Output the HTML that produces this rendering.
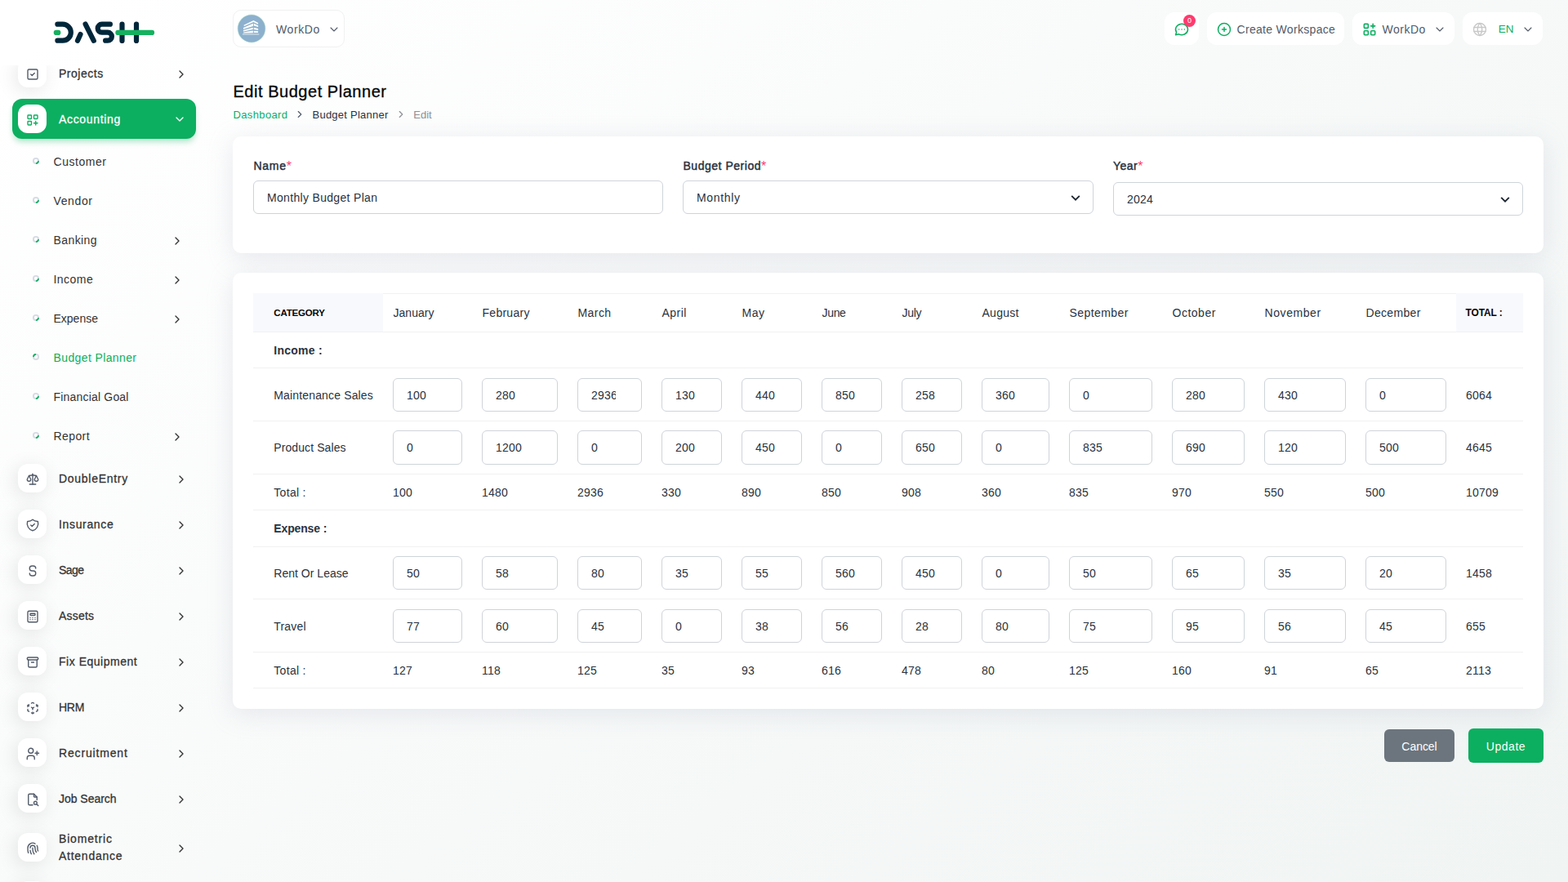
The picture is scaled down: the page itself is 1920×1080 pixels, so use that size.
<!DOCTYPE html><html lang="en"><head><meta charset="utf-8"><title>Edit Budget Planner</title><style>
*{box-sizing:border-box;margin:0;padding:0}
html,body{width:1920px;height:1080px;overflow:hidden}
body{font-family:"Liberation Sans",sans-serif;font-size:14px;color:#293240;background:linear-gradient(141.55deg,rgba(240,244,243,0) 3.46%,#f0f4f3 99.86%),#fff;position:relative}
.abs{position:absolute}
svg.ti{display:block}
.t{position:absolute;white-space:nowrap;line-height:1}
/* sidebar */
#side{position:absolute;left:0;top:0;width:280px;height:1080px}
#nav{position:absolute;left:0;top:80px;width:280px;height:1000px;overflow:hidden}
.mi{position:absolute;left:22px;width:35px;height:35px;border-radius:12px;background:#fff;box-shadow:-3px 4px 23px rgba(0,0,0,.1);display:flex;align-items:center;justify-content:center}
.mt{position:absolute;left:72px;font-size:14px;line-height:21px;color:#333;white-space:nowrap;-webkit-text-stroke:.28px #333}

.st{position:absolute;left:65.500px;font-size:14px;line-height:21px;color:#333;white-space:nowrap;letter-spacing:.3px}
.arr{position:absolute}
.dot{position:absolute;left:39px;width:10px;height:10px;overflow:visible}
/* header */
.hb{position:absolute;top:15px;height:40px;border-radius:12px;background:#fff}
.ht{position:absolute;font-size:14px;line-height:20px;white-space:nowrap}
/* cards */
.card{position:absolute;left:285px;width:1605px;background:#fff;border-radius:10px;box-shadow:0 6px 30px rgba(182,186,203,.3)}
.lbl{position:absolute;font-size:14px;line-height:21px;color:#293240;white-space:nowrap;-webkit-text-stroke:.45px #293240}
.lbl i{color:#ff3a6e;font-style:normal;-webkit-text-stroke:0;font-size:16px;line-height:1;position:relative;top:1px}
.inp{position:absolute;height:41px;border:1px solid #ced4da;border-radius:6px;background:#fff;font-size:14px;line-height:40.500px;padding-left:16px;color:#293240;white-space:nowrap;overflow:hidden}
.inp.n{letter-spacing:.22px}
/* table */
.hl{position:absolute;left:310px;width:1555px;height:1px;background:#f1f1f1}
.th{position:absolute;background:#f8f9fd}
.c{position:absolute;font-size:14px;line-height:21px;color:#293240;white-space:nowrap}
.c.n{letter-spacing:.22px}
.c.b{font-weight:700}
.c.h{font-size:12px;font-weight:700;color:#060606}
.btn{position:absolute;border-radius:6px;color:#fff;font-size:14px;text-align:center}
</style></head><body>
<div id="side">
<svg class="abs" style="left:65px;top:22px" width="126" height="36" viewBox="0 0 126 36" fill="none" stroke-linecap="round" stroke-linejoin="round" aria-label="Dash">
<g stroke="#00263a" stroke-width="6.200">
<path d="M5.400 7.660H11.800A10 10 0 0 1 11.800 27.700H5.400"/>
<path d="M30 27.850L33.500 20"/><path d="M39.600 7.600L49.800 27.850"/>
<path d="M69.900 7.660H59.700A5 5 0 0 0 59.700 17.700H66.900A5 5 0 0 1 66.900 27.700H64.100"/>
<path d="M84.500 7.600V28"/><path d="M102 7.600V28"/>
</g>
<g stroke="#14b15f" stroke-width="6.200"><path d="M3.800 17.900H6.300"/><path d="M79.400 17.900H121"/></g>
</svg>
<div id="nav">
<div class="mi" style="top:-8.0px;"><div style="margin:2.500px 0 0 0"><svg class="ti" width="18" height="18" viewBox="0 0 24 24" fill="none" stroke="#525b69" stroke-width="1.85" stroke-linecap="round" stroke-linejoin="round" ><rect x="4" y="4" width="16" height="16" rx="2"/><path d="M9 12l2 2l4 -4"/></svg></div></div>
<div class="mt" style="top:0.0px;letter-spacing:0.52px;">Projects</div>
<div class="arr" style="left:213.700px;top:3.0px"><svg class="ti" width="16" height="16" viewBox="0 0 24 24" fill="none" stroke="#333" stroke-width="2" stroke-linecap="round" stroke-linejoin="round" ><path d="M9 6l6 6l-6 6"/></svg></div>
<div class="abs" style="left:15px;top:41.0px;width:225px;height:49px;border-radius:12px;background:#0CAF60;box-shadow:0 5px 7px -1px rgba(12,175,96,.3)"></div>
<div class="mi" style="top:48.0px;box-shadow:none;"><div style="margin:2.500px 0 0 0"><svg class="ti" width="18" height="18" viewBox="0 0 24 24" fill="none" stroke="#0CAF60" stroke-width="1.85" stroke-linecap="round" stroke-linejoin="round" ><rect x="4" y="4" width="6" height="6" rx="1"/><rect x="14" y="4" width="6" height="6" rx="1"/><rect x="4" y="14" width="6" height="6" rx="1"/><path d="M14 17h6m-3 -3v6"/></svg></div></div>
<div class="mt" style="top:56.0px;color:#fff;-webkit-text-stroke-color:#fff;letter-spacing:0.67px;">Accounting</div>
<div class="arr" style="left:212.400px;top:57.5px"><svg class="ti" width="16" height="16" viewBox="0 0 24 24" fill="none" stroke="#fff" stroke-width="2" stroke-linecap="round" stroke-linejoin="round" ><path d="M6 9l6 6l6 -6"/></svg></div>
<svg class="dot" style="top:112.0px" viewBox="0 0 10 10" fill="none"><circle cx="5" cy="5" r="3.100" stroke="#d6dae4" stroke-width="1.900"/><path d="M7.990 5.800A3.100 3.100 0 0 1 5.800 7.990" stroke="#0CAF60" stroke-width="1.900" stroke-linecap="round"/></svg>
<div class="st" style="top:108.0px;color:#333;letter-spacing:0.54px;">Customer</div>
<svg class="dot" style="top:160.0px" viewBox="0 0 10 10" fill="none"><circle cx="5" cy="5" r="3.100" stroke="#d6dae4" stroke-width="1.900"/><path d="M7.990 5.800A3.100 3.100 0 0 1 5.800 7.990" stroke="#0CAF60" stroke-width="1.900" stroke-linecap="round"/></svg>
<div class="st" style="top:156.0px;color:#333;letter-spacing:0.62px;">Vendor</div>
<svg class="dot" style="top:208.0px" viewBox="0 0 10 10" fill="none"><circle cx="5" cy="5" r="3.100" stroke="#d6dae4" stroke-width="1.900"/><path d="M7.990 5.800A3.100 3.100 0 0 1 5.800 7.990" stroke="#0CAF60" stroke-width="1.900" stroke-linecap="round"/></svg>
<div class="st" style="top:204.0px;color:#333;letter-spacing:0.41px;">Banking</div>
<div class="arr" style="left:209.100px;top:207.0px"><svg class="ti" width="16" height="16" viewBox="0 0 24 24" fill="none" stroke="#333" stroke-width="2" stroke-linecap="round" stroke-linejoin="round" ><path d="M9 6l6 6l-6 6"/></svg></div>
<svg class="dot" style="top:256.0px" viewBox="0 0 10 10" fill="none"><circle cx="5" cy="5" r="3.100" stroke="#d6dae4" stroke-width="1.900"/><path d="M7.990 5.800A3.100 3.100 0 0 1 5.800 7.990" stroke="#0CAF60" stroke-width="1.900" stroke-linecap="round"/></svg>
<div class="st" style="top:252.0px;color:#333;letter-spacing:0.46px;">Income</div>
<div class="arr" style="left:209.100px;top:255.0px"><svg class="ti" width="16" height="16" viewBox="0 0 24 24" fill="none" stroke="#333" stroke-width="2" stroke-linecap="round" stroke-linejoin="round" ><path d="M9 6l6 6l-6 6"/></svg></div>
<svg class="dot" style="top:304.0px" viewBox="0 0 10 10" fill="none"><circle cx="5" cy="5" r="3.100" stroke="#d6dae4" stroke-width="1.900"/><path d="M7.990 5.800A3.100 3.100 0 0 1 5.800 7.990" stroke="#0CAF60" stroke-width="1.900" stroke-linecap="round"/></svg>
<div class="st" style="top:300.0px;color:#333;letter-spacing:0.0px;">Expense</div>
<div class="arr" style="left:209.100px;top:303.0px"><svg class="ti" width="16" height="16" viewBox="0 0 24 24" fill="none" stroke="#333" stroke-width="2" stroke-linecap="round" stroke-linejoin="round" ><path d="M9 6l6 6l-6 6"/></svg></div>
<svg class="dot" style="top:352.0px" viewBox="0 0 10 10" fill="none"><circle cx="5" cy="5" r="3.100" stroke="#d6dae4" stroke-width="1.900"/><path d="M2.010 4.200A3.100 3.100 0 0 1 4.200 2.010" stroke="#0CAF60" stroke-width="1.900" stroke-linecap="round"/></svg>
<div class="st" style="top:348.0px;color:#0CAF60;letter-spacing:0.38px;">Budget Planner</div>
<svg class="dot" style="top:400.0px" viewBox="0 0 10 10" fill="none"><circle cx="5" cy="5" r="3.100" stroke="#d6dae4" stroke-width="1.900"/><path d="M7.990 5.800A3.100 3.100 0 0 1 5.800 7.990" stroke="#0CAF60" stroke-width="1.900" stroke-linecap="round"/></svg>
<div class="st" style="top:396.0px;color:#333;letter-spacing:0.19px;">Financial Goal</div>
<svg class="dot" style="top:448.0px" viewBox="0 0 10 10" fill="none"><circle cx="5" cy="5" r="3.100" stroke="#d6dae4" stroke-width="1.900"/><path d="M7.990 5.800A3.100 3.100 0 0 1 5.800 7.990" stroke="#0CAF60" stroke-width="1.900" stroke-linecap="round"/></svg>
<div class="st" style="top:444.0px;color:#333;letter-spacing:0.4px;">Report</div>
<div class="arr" style="left:209.100px;top:447.0px"><svg class="ti" width="16" height="16" viewBox="0 0 24 24" fill="none" stroke="#333" stroke-width="2" stroke-linecap="round" stroke-linejoin="round" ><path d="M9 6l6 6l-6 6"/></svg></div>
<div class="mi" style="top:488.0px;"><div style="margin:2.500px 0 0 0"><svg class="ti" width="18" height="18" viewBox="0 0 24 24" fill="none" stroke="#525b69" stroke-width="1.85" stroke-linecap="round" stroke-linejoin="round" ><path d="M7 20h10"/><path d="M6 6l6 -1l6 1"/><path d="M12 3v17"/><path d="M9 12l-3 -6l-3 6a3 3 0 0 0 6 0"/><path d="M21 12l-3 -6l-3 6a3 3 0 0 0 6 0"/></svg></div></div>
<div class="mt" style="top:496.0px;letter-spacing:0.72px;">DoubleEntry</div>
<div class="arr" style="left:213.700px;top:499.0px"><svg class="ti" width="16" height="16" viewBox="0 0 24 24" fill="none" stroke="#333" stroke-width="2" stroke-linecap="round" stroke-linejoin="round" ><path d="M9 6l6 6l-6 6"/></svg></div>
<div class="mi" style="top:544.0px;"><div style="margin:2.500px 0 0 0"><svg class="ti" width="18" height="18" viewBox="0 0 24 24" fill="none" stroke="#525b69" stroke-width="1.85" stroke-linecap="round" stroke-linejoin="round" ><path d="M9 12l2 2l4 -4"/><path d="M12 3a12 12 0 0 0 8.5 3a12 12 0 0 1 -8.5 15a12 12 0 0 1 -8.5 -15a12 12 0 0 0 8.5 -3"/></svg></div></div>
<div class="mt" style="top:552.0px;letter-spacing:0.66px;">Insurance</div>
<div class="arr" style="left:213.700px;top:555.0px"><svg class="ti" width="16" height="16" viewBox="0 0 24 24" fill="none" stroke="#333" stroke-width="2" stroke-linecap="round" stroke-linejoin="round" ><path d="M9 6l6 6l-6 6"/></svg></div>
<div class="mi" style="top:600.0px;"><div style="margin:2.500px 0 0 0"><svg class="ti" width="18" height="18" viewBox="0 0 24 24" fill="none" stroke="#525b69" stroke-width="1.85" stroke-linecap="round" stroke-linejoin="round" ><path d="M17 8a4 4 0 0 0 -4 -4h-2a4 4 0 0 0 0 8h2a4 4 0 0 1 0 8h-2a4 4 0 0 1 -4 -4"/></svg></div></div>
<div class="mt" style="top:608.0px;letter-spacing:-0.56px;">Sage</div>
<div class="arr" style="left:213.700px;top:611.0px"><svg class="ti" width="16" height="16" viewBox="0 0 24 24" fill="none" stroke="#333" stroke-width="2" stroke-linecap="round" stroke-linejoin="round" ><path d="M9 6l6 6l-6 6"/></svg></div>
<div class="mi" style="top:656.0px;"><div style="margin:2.500px 0 0 0"><svg class="ti" width="18" height="18" viewBox="0 0 24 24" fill="none" stroke="#525b69" stroke-width="1.85" stroke-linecap="round" stroke-linejoin="round" ><rect x="4" y="3" width="16" height="18" rx="2"/><rect x="8" y="7" width="8" height="3" rx="1"/><path d="M8 14v.01M12 14v.01M16 14v.01M8 17v.01M12 17v.01M16 17v.01"/></svg></div></div>
<div class="mt" style="top:664.0px;letter-spacing:0.2px;">Assets</div>
<div class="arr" style="left:213.700px;top:667.0px"><svg class="ti" width="16" height="16" viewBox="0 0 24 24" fill="none" stroke="#333" stroke-width="2" stroke-linecap="round" stroke-linejoin="round" ><path d="M9 6l6 6l-6 6"/></svg></div>
<div class="mi" style="top:712.0px;"><div style="margin:2.500px 0 0 0"><svg class="ti" width="18" height="18" viewBox="0 0 24 24" fill="none" stroke="#525b69" stroke-width="1.85" stroke-linecap="round" stroke-linejoin="round" ><rect x="3" y="4" width="18" height="4" rx="2"/><path d="M5 8v10a2 2 0 0 0 2 2h10a2 2 0 0 0 2 -2v-10"/><path d="M10 12h4"/></svg></div></div>
<div class="mt" style="top:720.0px;letter-spacing:0.52px;">Fix Equipment</div>
<div class="arr" style="left:213.700px;top:723.0px"><svg class="ti" width="16" height="16" viewBox="0 0 24 24" fill="none" stroke="#333" stroke-width="2" stroke-linecap="round" stroke-linejoin="round" ><path d="M9 6l6 6l-6 6"/></svg></div>
<div class="mi" style="top:768.0px;"><div style="margin:2.500px 0 0 0"><svg class="ti" width="18" height="18" viewBox="0 0 24 24" fill="none" stroke="#525b69" stroke-width="1.85" stroke-linecap="round" stroke-linejoin="round" ><path d="M6 17.6l-2 -1.1v-2.5"/><path d="M4 10v-2.5l2 -1.1"/><path d="M10 4.1l2 -1.1l2 1.1"/><path d="M18 6.4l2 1.1v2.5"/><path d="M20 14v2.5l-2 1.12"/><path d="M14 19.9l-2 1.1l-2 -1.1"/><path d="M12 12l2 -1.1"/><path d="M18 8.6l2 -1.1"/><path d="M12 12v2.5"/><path d="M12 18.5v2.5"/><path d="M12 12l-2 -1.12"/><path d="M6 8.6l-2 -1.1"/></svg></div></div>
<div class="mt" style="top:776.0px;letter-spacing:-0.24px;">HRM</div>
<div class="arr" style="left:213.700px;top:779.0px"><svg class="ti" width="16" height="16" viewBox="0 0 24 24" fill="none" stroke="#333" stroke-width="2" stroke-linecap="round" stroke-linejoin="round" ><path d="M9 6l6 6l-6 6"/></svg></div>
<div class="mi" style="top:824.0px;"><div style="margin:2.500px 0 0 0"><svg class="ti" width="18" height="18" viewBox="0 0 24 24" fill="none" stroke="#525b69" stroke-width="1.85" stroke-linecap="round" stroke-linejoin="round" ><circle cx="9" cy="7" r="4"/><path d="M3 21v-2a4 4 0 0 1 4 -4h4a4 4 0 0 1 4 4v2"/><path d="M16 11h6m-3 -3v6"/></svg></div></div>
<div class="mt" style="top:832.0px;letter-spacing:0.83px;">Recruitment</div>
<div class="arr" style="left:213.700px;top:835.0px"><svg class="ti" width="16" height="16" viewBox="0 0 24 24" fill="none" stroke="#333" stroke-width="2" stroke-linecap="round" stroke-linejoin="round" ><path d="M9 6l6 6l-6 6"/></svg></div>
<div class="mi" style="top:880.0px;"><div style="margin:2.500px 0 0 0"><svg class="ti" width="18" height="18" viewBox="0 0 24 24" fill="none" stroke="#525b69" stroke-width="1.85" stroke-linecap="round" stroke-linejoin="round" ><path d="M14 3v4a1 1 0 0 0 1 1h4"/><path d="M12 21h-5a2 2 0 0 1 -2 -2v-14a2 2 0 0 1 2 -2h7l5 5v4.5"/><circle cx="16.5" cy="17.5" r="2.5"/><path d="M18.5 19.5l2.5 2.5"/></svg></div></div>
<div class="mt" style="top:888.0px;letter-spacing:-0.03px;">Job Search</div>
<div class="arr" style="left:213.700px;top:891.0px"><svg class="ti" width="16" height="16" viewBox="0 0 24 24" fill="none" stroke="#333" stroke-width="2" stroke-linecap="round" stroke-linejoin="round" ><path d="M9 6l6 6l-6 6"/></svg></div>
<div class="mi" style="top:940.0px;"><div style="margin:2.500px 0 0 0"><svg class="ti" width="18" height="18" viewBox="0 0 24 24" fill="none" stroke="#525b69" stroke-width="1.85" stroke-linecap="round" stroke-linejoin="round" ><path d="M18.9 7a8 8 0 0 1 1.1 5v1a6 6 0 0 0 .8 3"/><path d="M8 11a4 4 0 0 1 8 0v1a10 10 0 0 0 2 6"/><path d="M12 11v2a14 14 0 0 0 2.5 8"/><path d="M8 15a18 18 0 0 0 1.8 6"/><path d="M4.9 19a22 22 0 0 1 -.9 -7v-1a8 8 0 0 1 12 -6.95"/></svg></div></div>
<div class="mt" style="top:936.5px;"><span style="letter-spacing:0.83px;">Biometric</span><br><span style="letter-spacing:0.74px;">Attendance</span></div>
<div class="arr" style="left:213.700px;top:951.0px"><svg class="ti" width="16" height="16" viewBox="0 0 24 24" fill="none" stroke="#333" stroke-width="2" stroke-linecap="round" stroke-linejoin="round" ><path d="M9 6l6 6l-6 6"/></svg></div>
<div class="mi" style="top:999px"></div>
</div></div>
<div class="abs" style="left:285px;top:12px;width:137px;height:46px;border-radius:10px;background:#fff;border:1px solid #f1f1f1"></div>
<svg class="abs" style="left:290.100px;top:17px" width="36" height="36" viewBox="0 0 36 36"><circle cx="18" cy="18" r="17.400" fill="#cdeedd"/><circle cx="18" cy="18" r="16.700" fill="#8cb0cd"/>
<g fill="#fff"><polygon points="8.500,13.800 20.400,7.900 26.100,11 26.100,12.800 20.400,10 8.900,15.100"/><polygon points="7.900,16.900 19.900,11.800 19.900,14.900 8.100,18.700"/><polygon points="7.900,20.100 19.700,16.700 19.700,19.100 8.100,21.400"/><polygon points="8.100,22.400 19.900,20.600 19.900,23.200 8.100,23.600"/>
<polygon points="20.800,11.800 26.100,14.200 26.100,16.100 20.800,14.600"/><polygon points="20.800,16.700 26.100,18.100 26.100,19.900 20.800,18.900"/><polygon points="20.800,20.800 26.100,21.200 26.100,23.100 20.800,23"/></g>
<polygon fill="#b7d0e1" points="6.900,24 27.300,24 27.300,25.900 6.900,25.900"/></svg>
<div class="ht" style="left:338px;top:25.500px;color:#525b69;letter-spacing:0.6px;">WorkDo</div>
<div class="abs" style="left:400.80px;top:27.60px"><svg class="ti" width="16" height="16" viewBox="0 0 24 24" fill="none" stroke="#525b69" stroke-width="1.65" stroke-linecap="round" stroke-linejoin="round" ><path d="M6 9l6 6l6 -6"/></svg></div>
<div class="hb" style="left:1426px;width:42px"></div>
<div class="abs" style="left:1437px;top:26px"><svg class="ti" width="20" height="20" viewBox="0 0 24 24" fill="none" stroke="#0CAF60" stroke-width="1.8" stroke-linecap="round" stroke-linejoin="round" ><path d="M3 20l1.3 -3.9a9 8 0 1 1 3.4 2.9l-4.7 1"/><path d="M12 12v.01M8 12v.01M16 12v.01"/></svg></div>
<div class="abs" style="left:1449px;top:18px;width:15px;height:15px;border-radius:50%;background:#ff3a6e;color:#fff;font-size:9px;line-height:15px;text-align:center">0</div>
<div class="hb" style="left:1478px;width:168px"></div>
<div class="abs" style="left:1489px;top:26px"><svg class="ti" width="20" height="20" viewBox="0 0 24 24" fill="none" stroke="#0CAF60" stroke-width="1.8" stroke-linecap="round" stroke-linejoin="round" ><circle cx="12" cy="12" r="9"/><path d="M9 12h6M12 9v6"/></svg></div>
<div class="ht" style="left:1514.5px;top:25.500px;color:#525b69;letter-spacing:0.31px;">Create Workspace</div>
<div class="hb" style="left:1656px;width:125px"></div>
<div class="abs" style="left:1667px;top:26px"><svg class="ti" width="20" height="20" viewBox="0 0 24 24" fill="none" stroke="#0CAF60" stroke-width="1.9" stroke-linecap="round" stroke-linejoin="round" ><rect x="4" y="4" width="6" height="6" rx="1"/><rect x="4" y="14" width="6" height="6" rx="1"/><rect x="14" y="14" width="6" height="6" rx="1"/><path d="M14 7h6m-3 -3v6"/></svg></div>
<div class="ht" style="left:1692.5px;top:25.500px;color:#525b69;letter-spacing:0.5px;">WorkDo</div>
<div class="abs" style="left:1755.00px;top:27.70px"><svg class="ti" width="16" height="16" viewBox="0 0 24 24" fill="none" stroke="#525b69" stroke-width="1.65" stroke-linecap="round" stroke-linejoin="round" ><path d="M6 9l6 6l6 -6"/></svg></div>
<div class="hb" style="left:1791px;width:98px"></div>
<div class="abs" style="left:1802px;top:26px"><svg class="ti" width="20" height="20" viewBox="0 0 24 24" fill="none" stroke="#c8c8c8" stroke-width="1.6" stroke-linecap="round" stroke-linejoin="round" ><circle cx="12" cy="12" r="9"/><path d="M3.6 9h16.8M3.6 15h16.8M11.5 3a17 17 0 0 0 0 18M12.5 3a17 17 0 0 1 0 18"/></svg></div>
<div class="ht" style="left:1834.800px;top:25.500px;color:#0CAF60;font-size:13.500px;letter-spacing:0">EN</div>
<div class="abs" style="left:1862.90px;top:27.70px"><svg class="ti" width="16" height="16" viewBox="0 0 24 24" fill="none" stroke="#525b69" stroke-width="1.65" stroke-linecap="round" stroke-linejoin="round" ><path d="M6 9l6 6l6 -6"/></svg></div>
<div class="t" style="left:285.500px;top:100px;font-size:20px;line-height:24px;color:#060606;-webkit-text-stroke:.3px #060606;letter-spacing:0.53px;">Edit Budget Planner</div>
<div class="t" style="left:285.5px;top:133px;font-size:13px;line-height:16px;color:#0CAF60;letter-spacing:0.36px;">Dashboard</div>
<div class="abs" style="left:359.80px;top:133.30px"><svg class="ti" width="14" height="14" viewBox="0 0 24 24" fill="none" stroke="#525b69" stroke-width="2" stroke-linecap="round" stroke-linejoin="round" ><path d="M9 6l6 6l-6 6"/></svg></div>
<div class="t" style="left:382.5px;top:133px;font-size:13px;line-height:16px;color:#293240;letter-spacing:0.24px;">Budget Planner</div>
<div class="abs" style="left:483.80px;top:133.30px"><svg class="ti" width="14" height="14" viewBox="0 0 24 24" fill="none" stroke="#8c9097" stroke-width="2" stroke-linecap="round" stroke-linejoin="round" ><path d="M9 6l6 6l-6 6"/></svg></div>
<div class="t" style="left:506.3px;top:133px;font-size:13px;line-height:16px;color:#8c9097;letter-spacing:-0.02px;">Edit</div>
<div class="card" style="top:167px;height:143px"></div>
<div class="lbl" style="left:310.5px;top:193px"><span style="letter-spacing:0.71px;">Name</span><i>*</i></div>
<div class="inp" style="left:310px;top:221px;width:502px"><span style="letter-spacing:0.32px;">Monthly Budget Plan</span></div>
<div class="lbl" style="left:836.5px;top:193px"><span style="letter-spacing:0.52px;">Budget Period</span><i>*</i></div>
<div class="inp" style="left:836px;top:221px;width:503px"><span style="letter-spacing:0.68px;">Monthly</span></div>
<svg class="abs" style="left:1309.3px;top:233.7px" width="16" height="16" viewBox="0 0 16 16" fill="none" stroke="#1d2630" stroke-width="1.900" stroke-linecap="butt" stroke-linejoin="miter"><path d="M3.200 5.800l4.800 4.800l4.800 -4.800"/></svg>
<div class="lbl" style="left:1363px;top:193px"><span style="letter-spacing:0.46px;">Year</span><i>*</i></div>
<div class="inp n" style="left:1363px;top:223px;width:502px">2024</div>
<svg class="abs" style="left:1835.3px;top:235.7px" width="16" height="16" viewBox="0 0 16 16" fill="none" stroke="#1d2630" stroke-width="1.900" stroke-linecap="butt" stroke-linejoin="miter"><path d="M3.200 5.800l4.800 4.800l4.800 -4.800"/></svg>
<div class="card" style="top:334px;height:534px"></div>
<div class="th" style="left:310px;top:359px;width:158.700px;height:47px"></div>
<div class="th" style="left:1782.700px;top:359px;width:82.300px;height:47px"></div>
<div class="hl" style="left:468.700px;width:1314px;top:359px"></div>
<div class="hl" style="top:406px"></div>
<div class="hl" style="top:450px"></div>
<div class="hl" style="top:515px"></div>
<div class="hl" style="top:580px"></div>
<div class="hl" style="top:624px"></div>
<div class="hl" style="top:669px"></div>
<div class="hl" style="top:733px"></div>
<div class="hl" style="top:798px"></div>
<div class="hl" style="top:842px"></div>
<div class="c h" style="left:335.300px;top:373px;font-size:11.500px;letter-spacing:-0.17px;">CATEGORY</div>
<div class="c" style="left:481.5px;top:372.500px;letter-spacing:0.03px;">January</div>
<div class="c" style="left:590.5px;top:372.500px;letter-spacing:0.27px;">February</div>
<div class="c" style="left:707.5px;top:372.500px;letter-spacing:0.43px;">March</div>
<div class="c" style="left:810.5px;top:372.500px;letter-spacing:0.45px;">April</div>
<div class="c" style="left:908.5px;top:372.500px;letter-spacing:0.48px;">May</div>
<div class="c" style="left:1006.5px;top:372.500px;letter-spacing:-0.33px;">June</div>
<div class="c" style="left:1104.5px;top:372.500px;letter-spacing:-0.33px;">July</div>
<div class="c" style="left:1202.5px;top:372.500px;letter-spacing:0.27px;">August</div>
<div class="c" style="left:1309.5px;top:372.500px;letter-spacing:0.43px;">September</div>
<div class="c" style="left:1435.5px;top:372.500px;letter-spacing:0.51px;">October</div>
<div class="c" style="left:1548.5px;top:372.500px;letter-spacing:0.58px;">November</div>
<div class="c" style="left:1672.5px;top:372.500px;letter-spacing:0.32px;">December</div>
<div class="c h" style="left:1794.500px;top:373px;letter-spacing:-0.12px;">TOTAL :</div>
<div class="c b" style="left:335.300px;top:419.0px;letter-spacing:0.24px;">Income :</div>
<div class="c" style="left:335.300px;top:474.0px;letter-spacing:0.15px;">Maintenance Sales</div>
<div class="inp n" style="left:481px;top:463.0px;width:85px;">100</div>
<div class="inp n" style="left:590px;top:463.0px;width:93px;">280</div>
<div class="inp n" style="left:707px;top:463.0px;width:79px;"><span style="display:inline-block;width:30px;overflow:hidden;vertical-align:top">2936</span></div>
<div class="inp n" style="left:810px;top:463.0px;width:74px;">130</div>
<div class="inp n" style="left:908px;top:463.0px;width:74px;">440</div>
<div class="inp n" style="left:1006px;top:463.0px;width:74px;">850</div>
<div class="inp n" style="left:1104px;top:463.0px;width:74px;">258</div>
<div class="inp n" style="left:1202px;top:463.0px;width:83px;">360</div>
<div class="inp n" style="left:1309px;top:463.0px;width:102px;">0</div>
<div class="inp n" style="left:1435px;top:463.0px;width:89px;">280</div>
<div class="inp n" style="left:1548px;top:463.0px;width:100px;">430</div>
<div class="inp n" style="left:1672px;top:463.0px;width:99px;">0</div>
<div class="c n" style="left:1795px;top:474.0px">6064</div>
<div class="c" style="left:335.300px;top:538.0px;letter-spacing:0.09px;">Product Sales</div>
<div class="inp n" style="left:481px;top:527.0px;width:85px;height:42px;">0</div>
<div class="inp n" style="left:590px;top:527.0px;width:93px;height:42px;">1200</div>
<div class="inp n" style="left:707px;top:527.0px;width:79px;height:42px;">0</div>
<div class="inp n" style="left:810px;top:527.0px;width:74px;height:42px;">200</div>
<div class="inp n" style="left:908px;top:527.0px;width:74px;height:42px;">450</div>
<div class="inp n" style="left:1006px;top:527.0px;width:74px;height:42px;">0</div>
<div class="inp n" style="left:1104px;top:527.0px;width:74px;height:42px;">650</div>
<div class="inp n" style="left:1202px;top:527.0px;width:83px;height:42px;">0</div>
<div class="inp n" style="left:1309px;top:527.0px;width:102px;height:42px;">835</div>
<div class="inp n" style="left:1435px;top:527.0px;width:89px;height:42px;">690</div>
<div class="inp n" style="left:1548px;top:527.0px;width:100px;height:42px;">120</div>
<div class="inp n" style="left:1672px;top:527.0px;width:99px;height:42px;">500</div>
<div class="c n" style="left:1795px;top:538.0px">4645</div>
<div class="c" style="left:335.300px;top:593.0px;letter-spacing:0.31px;">Total :</div>
<div class="c n" style="left:481px;top:593.0px">100</div>
<div class="c n" style="left:590px;top:593.0px">1480</div>
<div class="c n" style="left:707px;top:593.0px">2936</div>
<div class="c n" style="left:810px;top:593.0px">330</div>
<div class="c n" style="left:908px;top:593.0px">890</div>
<div class="c n" style="left:1006px;top:593.0px">850</div>
<div class="c n" style="left:1104px;top:593.0px">908</div>
<div class="c n" style="left:1202px;top:593.0px">360</div>
<div class="c n" style="left:1309px;top:593.0px">835</div>
<div class="c n" style="left:1435px;top:593.0px">970</div>
<div class="c n" style="left:1548px;top:593.0px">550</div>
<div class="c n" style="left:1672px;top:593.0px">500</div>
<div class="c n" style="left:1795px;top:593.0px">10709</div>
<div class="c b" style="left:335.300px;top:636.5px;letter-spacing:-0.14px;">Expense :</div>
<div class="c" style="left:335.300px;top:692.0px;letter-spacing:0.02px;">Rent Or Lease</div>
<div class="inp n" style="left:481px;top:681.0px;width:85px;">50</div>
<div class="inp n" style="left:590px;top:681.0px;width:93px;">58</div>
<div class="inp n" style="left:707px;top:681.0px;width:79px;">80</div>
<div class="inp n" style="left:810px;top:681.0px;width:74px;">35</div>
<div class="inp n" style="left:908px;top:681.0px;width:74px;">55</div>
<div class="inp n" style="left:1006px;top:681.0px;width:74px;">560</div>
<div class="inp n" style="left:1104px;top:681.0px;width:74px;">450</div>
<div class="inp n" style="left:1202px;top:681.0px;width:83px;">0</div>
<div class="inp n" style="left:1309px;top:681.0px;width:102px;">50</div>
<div class="inp n" style="left:1435px;top:681.0px;width:89px;">65</div>
<div class="inp n" style="left:1548px;top:681.0px;width:100px;">35</div>
<div class="inp n" style="left:1672px;top:681.0px;width:99px;">20</div>
<div class="c n" style="left:1795px;top:692.0px">1458</div>
<div class="c" style="left:335.300px;top:757.0px;letter-spacing:0.17px;">Travel</div>
<div class="inp n" style="left:481px;top:746.0px;width:85px;">77</div>
<div class="inp n" style="left:590px;top:746.0px;width:93px;">60</div>
<div class="inp n" style="left:707px;top:746.0px;width:79px;">45</div>
<div class="inp n" style="left:810px;top:746.0px;width:74px;">0</div>
<div class="inp n" style="left:908px;top:746.0px;width:74px;">38</div>
<div class="inp n" style="left:1006px;top:746.0px;width:74px;">56</div>
<div class="inp n" style="left:1104px;top:746.0px;width:74px;">28</div>
<div class="inp n" style="left:1202px;top:746.0px;width:83px;">80</div>
<div class="inp n" style="left:1309px;top:746.0px;width:102px;">75</div>
<div class="inp n" style="left:1435px;top:746.0px;width:89px;">95</div>
<div class="inp n" style="left:1548px;top:746.0px;width:100px;">56</div>
<div class="inp n" style="left:1672px;top:746.0px;width:99px;">45</div>
<div class="c n" style="left:1795px;top:757.0px">655</div>
<div class="c" style="left:335.300px;top:811.0px;letter-spacing:0.31px;">Total :</div>
<div class="c n" style="left:481px;top:811.0px">127</div>
<div class="c n" style="left:590px;top:811.0px">118</div>
<div class="c n" style="left:707px;top:811.0px">125</div>
<div class="c n" style="left:810px;top:811.0px">35</div>
<div class="c n" style="left:908px;top:811.0px">93</div>
<div class="c n" style="left:1006px;top:811.0px">616</div>
<div class="c n" style="left:1104px;top:811.0px">478</div>
<div class="c n" style="left:1202px;top:811.0px">80</div>
<div class="c n" style="left:1309px;top:811.0px">125</div>
<div class="c n" style="left:1435px;top:811.0px">160</div>
<div class="c n" style="left:1548px;top:811.0px">91</div>
<div class="c n" style="left:1672px;top:811.0px">65</div>
<div class="c n" style="left:1795px;top:811.0px">2113</div>
<div class="btn" style="left:1695px;top:893px;width:86px;height:40px;line-height:42px;background:#6c757d;letter-spacing:-0.05px;">Cancel</div>
<div class="btn" style="left:1798px;top:892px;width:92px;height:42px;line-height:44px;background:#0CAF60;letter-spacing:0.55px;">Update</div>
</body></html>
